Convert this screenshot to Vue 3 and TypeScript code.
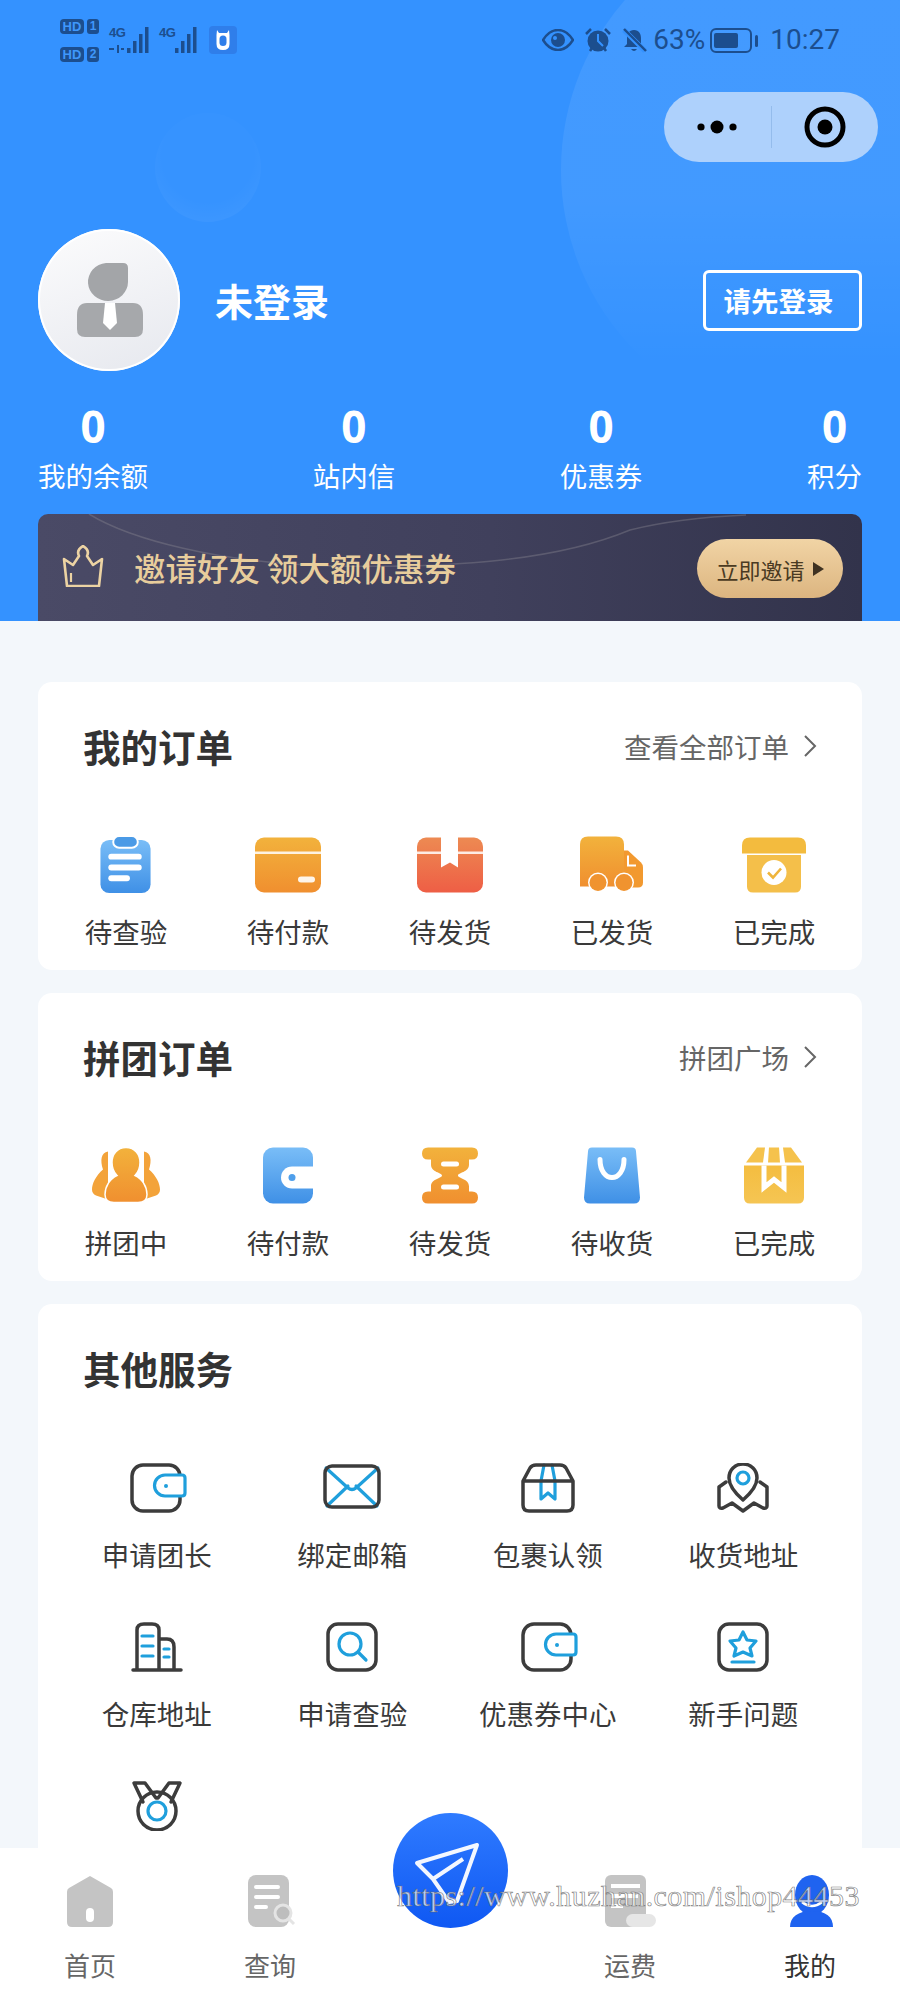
<script setup lang="ts">
const stats: { value: number; label: string }[] = [
  { value: 0, label: '我的余额' },
  { value: 0, label: '站内信' },
  { value: 0, label: '优惠券' },
  { value: 0, label: '积分' }
]
</script>

<template>
  <div class="page">
    <svg class="defs" width="0" height="0" aria-hidden="true">
      <defs>
        <linearGradient id="gBlue" x1="0" y1="0" x2="0" y2="1"><stop offset="0" stop-color="#79bdf7" /><stop offset="1" stop-color="#3f90e6" /></linearGradient>
        <linearGradient id="gOrange" x1="0" y1="0" x2="0" y2="1"><stop offset="0" stop-color="#f2b23c" /><stop offset="1" stop-color="#f08f2f" /></linearGradient>
        <linearGradient id="gRed" x1="0" y1="0" x2="0" y2="1"><stop offset="0" stop-color="#ed8a52" /><stop offset="1" stop-color="#ee5e45" /></linearGradient>
        <linearGradient id="gYellow" x1="0" y1="0" x2="0" y2="1"><stop offset="0" stop-color="#f4bd40" /><stop offset="1" stop-color="#f5c553" /></linearGradient>
      </defs>
    </svg>

    <header class="hero">
      <div class="deco-circle"></div>
      <div class="deco-bubble"></div>

      <div class="status">
        <div class="status-left">
          <div class="sims">
            <div class="sim"><span class="hd">HD</span><span class="num">1</span></div>
            <div class="sim"><span class="hd">HD</span><span class="num">2</span></div>
          </div>
          <div class="net net-first">
            <span class="g4">4G</span>
            <svg width="42" height="28" viewBox="0 0 42 28">
              <g fill="#1c4e8e">
                <path d="M1 22h5v2H1zM9 19h2v8H9zM13 22h3v2h-3z" />
                <rect x="19" y="22" width="3.500" height="5" /><rect x="25" y="15" width="3.500" height="12" /><rect x="31" y="8" width="3.500" height="19" /><rect x="37" y="1" width="3.500" height="26" />
              </g>
            </svg>
          </div>
          <div class="net net-second">
            <span class="g4">4G</span>
            <svg width="28" height="28" viewBox="0 0 28 28">
              <g fill="#1c4e8e">
                <rect x="3" y="22" width="3.500" height="5" /><rect x="9" y="15" width="3.500" height="12" /><rect x="15" y="8" width="3.500" height="19" /><rect x="21" y="1" width="3.500" height="26" />
              </g>
            </svg>
          </div>
          <svg class="app-ic" width="28" height="28" viewBox="0 0 28 28">
            <rect width="28" height="28" rx="4" fill="#2f7eea" />
            <path d="M8 4l2 3h8l2-3 .5 5v9q0 6-6.500 6t-6.500-6V9z" fill="#fff" />
            <rect x="10.500" y="9.500" width="7" height="10.500" rx="3.500" fill="#2f7eea" />
          </svg>
        </div>
        <div class="status-right">
          <svg width="32" height="22" viewBox="0 0 32 22">
            <path d="M1 11C6 3 11 1 16 1s10 2 15 10c-5 8-10 10-15 10S6 19 1 11z" fill="none" stroke="#1c4e8e" stroke-width="2.500" />
            <circle cx="16" cy="11" r="7" fill="#1c4e8e" /><circle cx="13" cy="9" r="2" fill="#3492ff" />
          </svg>
          <svg width="28" height="26" viewBox="0 0 28 26">
            <circle cx="14" cy="14" r="10.500" fill="#1c4e8e" />
            <path d="M14 7v7l5 5" fill="none" stroke="#3492ff" stroke-width="2" />
            <path d="M2 7l5-5M26 7l-5-5M6 24l2-3M22 24l-2-3" stroke="#1c4e8e" stroke-width="2.500" />
          </svg>
          <svg width="25" height="25" viewBox="0 0 25 25">
            <path d="M12 2c-5 0-7 4-7 8v6l-3 3h20l-3-3v-6c0-4-2-8-7-8z" fill="#1c4e8e" />
            <path d="M9 21q3 4 6 0z" fill="#1c4e8e" />
            <path d="M2 2l21 21" stroke="#3492ff" stroke-width="5" />
            <path d="M2 1l22 22" stroke="#1c4e8e" stroke-width="2.400" />
          </svg>
          <span class="pct">63%</span>
          <svg class="batt" width="49" height="25" viewBox="0 0 49 25">
            <rect x="1" y="1" width="40" height="23" rx="5" fill="none" stroke="#1c4e8e" stroke-width="2" />
            <rect x="4" y="5" width="24" height="15" rx="2" fill="#1c4e8e" />
            <rect x="45" y="7" width="3" height="12" rx="1.500" fill="#1c4e8e" />
          </svg>
          <span class="time">10:27</span>
        </div>
      </div>

      <div class="capsule-row">
        <div class="capsule">
          <div class="cap-part">
            <svg width="40" height="16" viewBox="0 0 40 16">
              <circle cx="4" cy="8" r="3.600" /><circle cx="20" cy="8" r="6.500" /><circle cx="36" cy="8" r="3.600" />
            </svg>
          </div>
          <div class="cap-part cap-second">
            <svg width="42" height="42" viewBox="0 0 42 42">
              <circle cx="21" cy="21" r="18" fill="none" stroke="#000" stroke-width="5" /><circle cx="21" cy="21" r="7.500" />
            </svg>
          </div>
        </div>
      </div>

      <div class="profile">
        <div class="avatar">
          <svg width="142" height="142" viewBox="0 0 142 142">
            <path d="M68 34h17q5 0 5 5v14a20 19 0 1 1-22-19z" fill="#a3a5a8" />
            <path d="M49 74h46q10 0 10 12v14q0 8-8 8H47q-8 0-8-8V86q0-12 10-12z" fill="#a6a8ab" />
            <path d="M67 74h10l2 20-7 7-7-7z" fill="#fff" />
          </svg>
        </div>
        <div class="nick">未登录</div>
        <button class="login">请先登录</button>
      </div>

      <div class="stats">
        <div v-for="s in stats" :key="s.label" class="stat">
          <div class="stat-num">{{ s.value }}</div>
          <div class="stat-label">{{ s.label }}</div>
        </div>
      </div>

      <div class="banner">
        <svg class="banner-lines" width="824" height="107" viewBox="0 0 824 107">
          <path d="M51 0C90 24 180 50 300 52S520 46 592 16Q640 4 708 1" fill="none" stroke="#8a8690" stroke-opacity=".4" stroke-width="1.500" />
        </svg>
        <svg class="crown" width="44" height="42" viewBox="0 0 44 42">
          <path d="M3 14l9 6 6-9q-3-6 4-10 7 4 4 10l6 9 9-6-3 27H6z" fill="none" stroke="#ecd3a3" stroke-width="2.600" stroke-linejoin="round" />
          <path d="M10 28v9" stroke="#ecd3a3" stroke-width="2.200" />
        </svg>
        <span class="banner-text">邀请好友 领大额优惠券</span>
        <div class="invite">
          <span>立即邀请</span>
          <i class="tri"></i>
        </div>
      </div>
    </header>

    <main class="main">
      <section class="card">
        <div class="head">
          <h2>我的订单</h2>
          <div class="more">
            <span>查看全部订单</span>
            <svg width="14" height="24" viewBox="0 0 14 24"><path d="M2 2l10 10L2 22" fill="none" stroke="#666" stroke-width="2" /></svg>
          </div>
        </div>
        <div class="grid5">
          <div class="item">
            <svg width="64" height="58" viewBox="0 0 64 58">
              <rect x="6" y="4" width="51" height="54" rx="9" fill="url(#gBlue)" />
              <rect x="19" y="0" width="25" height="12" rx="6" fill="#4a9ae6" stroke="#fff" stroke-width="2" />
              <rect x="14" y="18" width="34" height="6" rx="3" fill="#fff" /><rect x="14" y="29" width="34" height="6" rx="3" fill="#fff" /><rect x="14" y="40" width="22" height="6" rx="3" fill="#fff" />
            </svg>
            <span>待查验</span>
          </div>
          <div class="item">
            <svg width="66" height="56" viewBox="0 0 66 56">
              <rect y="1" width="66" height="55" rx="9" fill="url(#gOrange)" />
              <rect y="15" width="66" height="2.500" fill="#fff" opacity=".85" />
              <rect x="43" y="40" width="17" height="6" rx="3" fill="#fff" opacity=".9" />
            </svg>
            <span>待付款</span>
          </div>
          <div class="item">
            <svg width="66" height="56" viewBox="0 0 66 56">
              <rect y="1" width="66" height="55" rx="9" fill="url(#gRed)" />
              <rect y="15" width="66" height="2.500" fill="#fff" opacity=".85" />
              <path d="M24 0h17v31l-8-5-9 5z" fill="#fff" />
            </svg>
            <span>待发货</span>
          </div>
          <div class="item">
            <svg width="64" height="56" viewBox="0 0 64 56">
              <path d="M8 0h28q8 0 8 8v42H0V8q0-8 8-8z" fill="url(#gOrange)" />
              <path d="M44 14h4l13 12q2 2 2 5v15q0 5-5 5H44z" fill="#f2992f" />
              <path d="M48 19v10h8" fill="none" stroke="#fff" stroke-width="2" />
              <circle cx="18" cy="46" r="10" fill="#fff" /><circle cx="18" cy="46" r="8.500" fill="#f0932f" />
              <circle cx="44" cy="46" r="10" fill="#fff" /><circle cx="44" cy="46" r="8.500" fill="#f0932f" />
            </svg>
            <span>已发货</span>
          </div>
          <div class="item">
            <svg width="64" height="56" viewBox="0 0 64 56">
              <path d="M8 1h48q8 0 8 8v8H0V9q0-8 8-8z" fill="#f3bb3e" />
              <path d="M5 18.500h54V50q0 6-6 6H11q-6 0-6-6z" fill="#f4bf4a" />
              <circle cx="32" cy="36" r="12.500" fill="#fff" />
              <path d="M26 36l5 5 8-9" fill="none" stroke="#efb53c" stroke-width="2.600" />
            </svg>
            <span>已完成</span>
          </div>
        </div>
      </section>

      <section class="card">
        <div class="head">
          <h2>拼团订单</h2>
          <div class="more">
            <span>拼团广场</span>
            <svg width="14" height="24" viewBox="0 0 14 24"><path d="M2 2l10 10L2 22" fill="none" stroke="#666" stroke-width="2" /></svg>
          </div>
        </div>
        <div class="grid5">
          <div class="item">
            <svg width="68" height="56" viewBox="0 0 68 56">
              <path d="M16 4C9 5 8 13 11 22 4 28 0 36 0 42q0 4 4 6l12 4z" fill="#f3a33a" />
              <path d="M52 4c7 1 8 9 5 18 7 6 11 14 11 20q0 4-4 6l-12 4z" fill="#f3a33a" />
              <path d="M34 0c9 0 14 7 14 15 0 6-2 10-5 13 7 3 12 11 12 19q0 8-9 8H22q-9 0-9-8c0-8 5-16 12-19-3-3-5-7-5-13 0-8 5-15 14-15z" fill="url(#gOrange)" stroke="#fff" stroke-width="1.500" />
            </svg>
            <span>拼团中</span>
          </div>
          <div class="item">
            <svg width="50" height="56" viewBox="0 0 50 56">
              <rect width="50" height="56" rx="10" fill="url(#gBlue)" />
              <path d="M50 19H29a11 11 0 0 0 0 22h21z" fill="#fff" />
              <circle cx="29" cy="30" r="3.500" fill="#4f9feb" />
            </svg>
            <span>待付款</span>
          </div>
          <div class="item">
            <svg width="56" height="56" viewBox="0 0 56 56">
              <path d="M6 0h44q6 0 6 6t-6 6h-3v5c0 8-11 8-11 11s11 3 11 11v5h3q6 0 6 6t-6 6H6q-6 0-6-6t6-6h3v-5c0-8 11-8 11-11S9 25 9 17v-5H6q-6 0-6-6t6-6z" fill="url(#gOrange)" />
              <rect x="19" y="14" width="18" height="5" rx="2.500" fill="#fff" /><rect x="19" y="37" width="18" height="5" rx="2.500" fill="#fff" />
            </svg>
            <span>待发货</span>
          </div>
          <div class="item">
            <svg width="56" height="56" viewBox="0 0 56 56">
              <path d="M8 0h40q4 0 4 4l4 46q0 6-6 6H6q-6 0-6-6L4 4q0-4 4-4z" fill="url(#gBlue)" />
              <path d="M16 12c0 24 24 24 24 0" fill="none" stroke="#fff" stroke-width="5" stroke-linecap="round" />
            </svg>
            <span>待收货</span>
          </div>
          <div class="item">
            <svg width="60" height="56" viewBox="0 0 60 56">
              <path d="M13 0h8l-2 15H2z" fill="#f5c24c" /><path d="M25 0h10l1 15H24z" fill="#f5c24c" /><path d="M39 0h8l11 15H41z" fill="#f5c24c" />
              <path d="M0 18h60v32q0 6-6 6H6q-6 0-6-6z" fill="url(#gYellow)" />
              <path d="M20 18v22l10-8 10 8V18" fill="none" stroke="#fff" stroke-width="5" />
            </svg>
            <span>已完成</span>
          </div>
        </div>
      </section>

      <section class="card card-services">
        <div class="head">
          <h2>其他服务</h2>
        </div>
        <div class="grid4">
          <div class="item svc">
            <svg class="line" width="60" height="50" viewBox="0 0 60 50">
              <rect x="5" y="2" width="48" height="46" rx="11" /><path class="ac" d="M58 15q0-3-3-3H38a10.500 10.500 0 0 0 0 21h17q3 0 3-3z" fill="#fff" /><circle class="dot" cx="39" cy="23" r="2" />
            </svg>
            <span>申请团长</span>
          </div>
          <div class="item svc">
            <svg class="line" width="60" height="50" viewBox="0 0 60 50">
              <path class="ac" d="M4 5l22 20q4 3 8 0L56 5M5 43l21-20M55 43L34 23" /><rect x="3" y="3" width="54" height="41" rx="7" />
            </svg>
            <span>绑定邮箱</span>
          </div>
          <div class="item svc">
            <svg class="line" width="60" height="50" viewBox="0 0 60 50">
              <path class="ac" d="M26 2l-3 16v18l7-6 7 6V18L34 2" />
              <path d="M5 18l7-13q2-3 6-3h24q4 0 6 3l7 13v24q0 6-6 6H11q-6 0-6-6zM5 18h50" />
            </svg>
            <span>包裹认领</span>
          </div>
          <div class="item svc">
            <svg class="line" width="60" height="50" viewBox="0 0 60 50">
              <path d="M13 19l-7 5v19q0 3 4 2l9-5 11 8 11-8 9 5q4 1 4-2V24l-7-5" />
              <path d="M30 37C22 30 16 23 16 15 16 7 22 1 30 1s14 6 14 14c0 8-6 15-14 22z" />
              <circle class="ac" cx="30" cy="15" r="6" />
            </svg>
            <span>收货地址</span>
          </div>
          <div class="item svc">
            <svg class="line" width="60" height="50" viewBox="0 0 60 50">
              <path d="M6 48h48M10 47V8q0-6 7-6h8q7 0 7 6v39M32 17h8q7 0 7 8v22" />
              <path class="ac" d="M15 14h11M15 24h11M15 34h11M37 27h5M37 35h5" />
            </svg>
            <span>仓库地址</span>
          </div>
          <div class="item svc">
            <svg class="line" width="60" height="50" viewBox="0 0 60 50">
              <rect x="6" y="2" width="48" height="46" rx="10" />
              <circle class="ac" cx="28" cy="22" r="11" /><path class="ac" d="M36 30l8 8" />
            </svg>
            <span>申请查验</span>
          </div>
          <div class="item svc">
            <svg class="line" width="60" height="50" viewBox="0 0 60 50">
              <rect x="5" y="2" width="48" height="46" rx="11" /><path class="ac" d="M58 15q0-3-3-3H38a10.500 10.500 0 0 0 0 21h17q3 0 3-3z" fill="#fff" /><circle class="dot" cx="39" cy="23" r="2" />
            </svg>
            <span>优惠券中心</span>
          </div>
          <div class="item svc">
            <svg class="line" width="60" height="50" viewBox="0 0 60 50">
              <rect x="6" y="2" width="48" height="46" rx="10" />
              <path class="ac" d="M30 10l4 8 9 1-6 7 2 8-9-4-9 4 2-8-6-7 9-1zM19 40h22" />
            </svg>
            <span>新手问题</span>
          </div>
          <div class="item svc">
            <svg class="line" width="60" height="50" viewBox="0 0 60 50">
              <path d="M16 21L7 2h11l11 15M44 21l9-19H42L31 17" />
              <ellipse cx="30" cy="30" rx="19" ry="19" />
              <circle class="ac" cx="30" cy="30" r="9" />
            </svg>
          </div>
        </div>
      </section>
    </main>

    <nav class="tabbar">
      <div class="fab">
        <svg width="115" height="115" viewBox="0 0 115 115">
          <path d="M84 32L24 50l16 16 16 23 8-1zM70 46L40 66" fill="none" stroke="#fff" stroke-width="4" stroke-linejoin="round" stroke-opacity=".95" />
        </svg>
      </div>
      <div class="tab">
        <svg width="60" height="52" viewBox="0 0 60 52">
          <path d="M30 1l21 12q2 1 2 4v30q0 5-5 5H12q-5 0-5-5V17q0-3 2-4z" fill="#c4c4c4" />
          <rect x="26" y="33" width="8" height="14" rx="4" fill="#fff" />
        </svg>
        <span>首页</span>
      </div>
      <div class="tab">
        <svg width="60" height="52" viewBox="0 0 60 52">
          <rect x="8" width="41" height="52" rx="8" fill="#c4c4c4" />
          <path d="M16 12h22M16 22h22M16 32h10" stroke="#fff" stroke-width="4" stroke-linecap="round" />
          <circle cx="43" cy="38" r="8" fill="#bdbdbd" stroke="#e4e4e4" stroke-width="3" /><path d="M49 44l5 5" stroke="#e4e4e4" stroke-width="3" />
        </svg>
        <span>查询</span>
      </div>
      <div class="tab tab-gap"></div>
      <div class="tab">
        <svg width="60" height="52" viewBox="0 0 60 52">
          <rect x="5" width="41" height="52" rx="6" fill="#c4c4c4" />
          <path d="M11 11h29M11 21h27M11 31h12" stroke="#fff" stroke-width="4" />
          <rect x="26" y="39" width="30" height="13" rx="6.500" fill="#e6e6e6" />
        </svg>
        <span>运费</span>
      </div>
      <div class="tab tab-on">
        <svg width="60" height="52" viewBox="0 0 60 52">
          <ellipse cx="32" cy="20" rx="17" ry="20" fill="#1f63f0" />
          <path d="M22 27q10 8 20 0" fill="none" stroke="#fff" stroke-width="2.500" />
          <path d="M10 52c0-10 8-16 22-16s21 6 21 16z" fill="#1f63f0" />
        </svg>
        <span>我的</span>
      </div>
      <div class="wm">https://www.huzhan.com/ishop44453</div>
    </nav>
  </div>
</template>

<style scoped>
.page {
  position: relative;
  width: 900px;
  height: 2000px;
  overflow: hidden;
  background: #f3f7fb;
  font-family: "Noto Sans CJK SC", "Noto Sans", sans-serif;
  color: #3a3a3a;
}
.defs { position: absolute; }

.hero {
  position: relative;
  height: 621px;
  overflow: hidden;
  background: #3492ff;
  color: #fff;
}
.deco-circle {
  position: absolute;
  left: 561px;
  top: -88px;
  width: 516px;
  height: 516px;
  border-radius: 50%;
  background: linear-gradient(180deg, rgba(255,255,255,0.075) 0%, rgba(255,255,255,0.07) 55%, rgba(255,255,255,0) 88%);
}
.deco-bubble {
  position: absolute;
  left: 155px;
  top: 113px;
  width: 106px;
  height: 109px;
  border-radius: 50%;
  background: radial-gradient(circle at 50% 40%, rgba(255,255,255,0.01) 55%, rgba(255,255,255,0.07) 100%);
}

.status {
  position: relative;
  display: flex;
  align-items: center;
  justify-content: space-between;
  height: 80px;
  padding: 0 60px;
  color: #1c4e8e;
}
.status-left, .status-right { display: flex; align-items: center; }
.sims { display: flex; flex-direction: column; gap: 13px; }
.sim { display: flex; align-items: center; gap: 3px; }
.hd {
  width: 24px;
  height: 15px;
  border-radius: 4px;
  background: #1c4e8e;
  color: #3f97fb;
  font: 700 13px/15px "Liberation Sans", sans-serif;
  text-align: center;
}
.num {
  width: 12px;
  height: 15px;
  border-radius: 3px;
  background: #1c4e8e;
  color: #3f97fb;
  font: 700 12px/15px "Liberation Sans", sans-serif;
  text-align: center;
}
.net { position: relative; display: flex; align-items: flex-end; height: 28px; }
.net-first { margin-left: 9px; }
.net-second { margin-left: 8px; padding-left: 14px; }
.g4 {
  position: absolute;
  left: 1px;
  top: 0;
  font: 700 13px/13px "Liberation Sans Narrow", "Liberation Sans", sans-serif;
  color: #1c4e8e;
  letter-spacing: -0.5px;
}
.app-ic { margin-left: 9px; }
.status-right svg { display: block; }
.status-right svg + svg { margin-left: 10px; }
.pct { margin-left: 6px; font: 400 28px/30px Roboto, sans-serif; }
.batt { margin-left: 5px; }
.time { margin-left: 11px; font: 400 28px/30px Roboto, sans-serif; }

.capsule-row {
  position: relative;
  display: flex;
  justify-content: flex-end;
  margin-top: 12px;
  padding-right: 22px;
}
.capsule {
  display: flex;
  align-items: center;
  width: 214px;
  height: 70px;
  border-radius: 35px;
  background: #aed1fc;
}
.cap-part {
  flex: 1;
  display: flex;
  align-items: center;
  justify-content: center;
  height: 42px;
}
.cap-second { border-left: 1px solid #94bcec; }

.profile {
  position: relative;
  display: flex;
  align-items: center;
  margin-top: 67px;
  padding: 0 38px;
}
.avatar {
  width: 142px;
  height: 142px;
  box-sizing: border-box;
  border-radius: 50%;
  overflow: hidden;
  background: linear-gradient(160deg, #fcfcfd, #e6e8ee);
  box-shadow: inset 0 0 0 2px #fff;
}
.nick {
  margin-left: 35px;
  font-size: 38px;
  line-height: 50px;
  font-weight: 700;
}
.login {
  margin-left: auto;
  width: 159px;
  height: 61px;
  padding: 0 8px 0 0;
  border: 3px solid #fff;
  border-radius: 6px;
  background: transparent;
  color: #fff;
  font-family: inherit;
  font-size: 27.500px;
  font-weight: 700;
}

.stats {
  position: relative;
  display: flex;
  justify-content: space-between;
  margin-top: 31px;
  padding: 0 38px;
}
.stat { text-align: center; }
.stat-num {
  font: 700 44px/48px "Noto Sans", sans-serif;
}
.stat-label {
  margin-top: 5px;
  font-size: 27.500px;
  line-height: 40px;
  white-space: nowrap;
}

.banner {
  position: relative;
  display: flex;
  align-items: center;
  height: 107px;
  margin: 19px 38px 0;
  padding: 0 19px 0 23px;
  border-radius: 10px 10px 0 0;
  overflow: hidden;
  background: linear-gradient(90deg, #4a4a66, #40405c 55%, #32334b);
}
.banner-lines { position: absolute; left: 0; top: 0; }
.crown { position: relative; margin-top: -4px; }
.banner-text {
  position: relative;
  margin-left: 29px;
  margin-top: -2px;
  color: #e8cd9c;
  font-size: 31.500px;
  font-weight: 500;
  white-space: nowrap;
}
.invite {
  position: relative;
  display: flex;
  align-items: center;
  justify-content: center;
  gap: 8px;
  width: 146px;
  height: 59px;
  margin-left: auto;
  margin-top: 2px;
  border-radius: 30px;
  background: linear-gradient(180deg, #f1d4a5, #dcb580);
  color: #4a3a22;
  font-size: 22px;
}
.tri {
  width: 0;
  height: 0;
  border-left: 11px solid #3f3222;
  border-top: 7px solid transparent;
  border-bottom: 7px solid transparent;
}

.main {
  display: flex;
  flex-direction: column;
  gap: 23px;
  padding: 61px 38px 0;
}
.card {
  background: #fff;
  border-radius: 14px;
  height: 288px;
  box-sizing: border-box;
  padding-top: 45px;
}
.card-services { height: 620px; }
.head {
  display: flex;
  align-items: center;
  justify-content: space-between;
  height: 38px;
  padding: 0 45px 0 45px;
}
h2 {
  margin: 0;
  color: #333;
  font-size: 37.500px;
  line-height: 38px;
  font-weight: 700;
}
.more {
  display: flex;
  align-items: center;
  gap: 14px;
  color: #666;
  font-size: 27.500px;
  line-height: 38px;
}
.more svg { display: block; }
.grid5 {
  display: grid;
  grid-template-columns: repeat(5, 162px);
  margin-top: 71px;
  padding-left: 7px;
}
.item {
  display: flex;
  flex-direction: column;
  align-items: center;
}
.item svg { display: block; height: 57px; }
.item span {
  margin-top: 18px;
  font-size: 27.500px;
  line-height: 40px;
  white-space: nowrap;
}
.grid4 {
  display: grid;
  grid-template-columns: repeat(4, 195.500px);
  row-gap: 48px;
  margin-top: 76px;
  padding-left: 21px;
}
.svc svg { height: 50px; }
.svc span { margin-top: 21px; }
.line {
  fill: none;
  stroke: #3c3c3c;
  stroke-width: 3.500px;
  stroke-linejoin: round;
  stroke-linecap: round;
}
.line .ac { stroke: #1f9fdc; stroke-width: 3.200px; }
.line .dot { fill: #1f9fdc; stroke: none; }

.tabbar {
  position: absolute;
  left: 0;
  right: 0;
  bottom: 0;
  display: flex;
  height: 152px;
  box-sizing: border-box;
  padding-top: 27px;
  background: #fff;
}
.tab {
  flex: 1;
  display: flex;
  flex-direction: column;
  align-items: center;
  color: #666;
}
.tab svg { display: block; }
.tab span {
  margin-top: 18px;
  font-size: 26px;
  line-height: 40px;
}
.tab-on { color: #333; }
.fab {
  position: absolute;
  left: 393px;
  top: -35px;
  width: 115px;
  height: 115px;
  border-radius: 50%;
  background: linear-gradient(180deg, #2f7bff, #0f58f3);
}
.wm {
  position: absolute;
  left: 397px;
  top: 29px;
  width: 470px;
  color: rgba(255, 255, 255, 0.7);
  -webkit-text-stroke: 0.7px rgba(100, 100, 100, 0.8);
  font-family: "Liberation Serif", serif;
  font-size: 30px;
  line-height: 38px;
  letter-spacing: 0.45px;
  white-space: nowrap;
}
</style>
